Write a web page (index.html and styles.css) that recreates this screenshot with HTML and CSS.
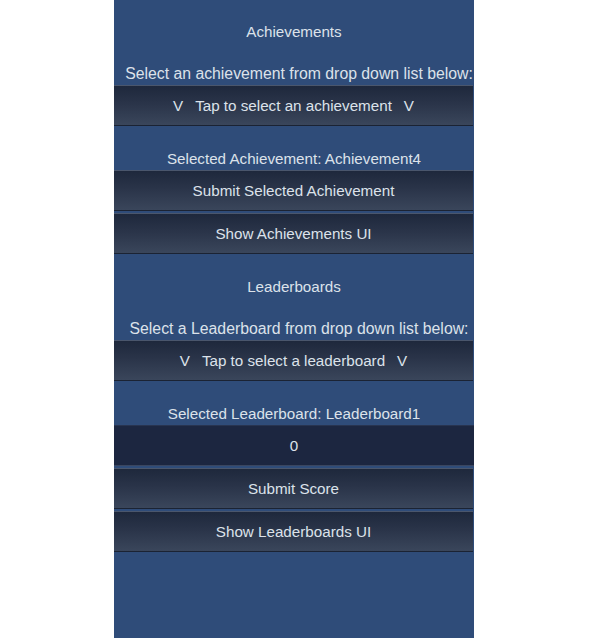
FILE: index.html
```html
<!DOCTYPE html>
<html>
<head>
<meta charset="utf-8">
<link rel="stylesheet" href="styles.css">
</head>
<body>
<div class="panel">
  <div class="title t1">Achievements</div>
  <div class="label l1">Select an achievement from drop down list below:</div>
  <div class="btn"><span class="v">V</span>Tap to select an achievement<span class="v">V</span></div>
  <div class="label l2">Selected Achievement: Achievement4</div>
  <div class="btn">Submit Selected Achievement</div>
  <div class="btn gap">Show Achievements UI</div>
  <div class="title t2">Leaderboards</div>
  <div class="label l1 l1b">Select a Leaderboard from drop down list below:</div>
  <div class="btn"><span class="v">V</span>Tap to select a leaderboard<span class="v">V</span></div>
  <div class="label l2">Selected Leaderboard: Leaderboard1</div>
  <div class="input">0</div>
  <div class="btn gap">Submit Score</div>
  <div class="btn gap">Show Leaderboards UI</div>
</div>
</body>
</html>
```
FILE: styles.css
```css
html, body { margin: 0; padding: 0; background: #ffffff; }
body { font-family: "Liberation Sans", Arial, sans-serif; font-size: 15.2px; color: #dce2ea; }
.panel {
  width: 360px;
  height: 638px;
  margin-left: 114px;
  background: #2f4c79;
  display: flex;
  flex-direction: column;
}
.title { text-align: center; display: flex; align-items: center; justify-content: center; padding-top: 1px; box-sizing: border-box; }
.t1 { height: 62px; }
.t2 { height: 64px; }
.label { text-align: center; display: flex; align-items: flex-end; justify-content: center; line-height: 22px; white-space: nowrap; }
.l1 { height: 23px; font-size: 15.8px; padding-left: 10px; }
.l1b { height: 22px; }
.l2 { height: 44px; line-height: 22px; }
.btn {
  height: 41px;
  box-sizing: border-box;
  background: linear-gradient(to bottom, #1e283c 0%, #2a3449 45%, #3a465b 100%);
  border-top: 1px solid #4a566c;
  border-bottom: 1px solid #1b2333;
  display: flex;
  align-items: center;
  justify-content: center;
  margin-right: 1px;
}
.gap { margin-top: 2px; }
.v { margin: 0 12px; }
.input {
  height: 41px;
  box-sizing: border-box;
  background: #1c2640;
  border-top: 1px solid #283450;
  border-bottom: 1px solid #3a4660;
  display: flex;
  align-items: center;
  justify-content: center;
}
```
